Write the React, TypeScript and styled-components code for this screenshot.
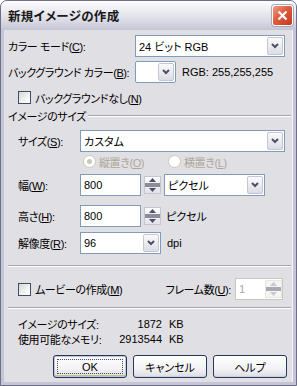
import React from 'react';
import styled, { createGlobalStyle } from 'styled-components';

const GlobalStyle = createGlobalStyle`
  html, body {
    margin: 0;
    padding: 0;
    background: #ffffff;
  }
  body {
    font-family: 'Liberation Sans', 'Noto Sans CJK JP', sans-serif;
    font-size: 11px;
    color: #000000;
    font-feature-settings: 'palt';
  }
`;

const Window = styled.div`
  width: 297px;
  height: 386px;
  box-sizing: border-box;
  border: 1px solid #6f6e89;
  border-radius: 7px 7px 0 0;
  background: #c6c5d7;
  display: flex;
  flex-direction: column;
  overflow: hidden;
`;

const TitleBar = styled.div`
  height: 29px;
  flex: none;
  display: flex;
  align-items: center;
  justify-content: space-between;
  padding: 0 3px 0 7px;
  background: linear-gradient(#fdfdfe 0%, #eeeef4 30%, #dadae4 70%, #c4c4d4 100%);
`;

const Title = styled.span`
  font-weight: bold;
  font-size: 12.5px;
  color: #1a1a1a;
  letter-spacing: 0.3px;
`;

const CloseButton = styled.div`
  width: 21px;
  height: 21px;
  box-sizing: border-box;
  border: 1px solid #ffffff;
  border-radius: 3px;
  background: linear-gradient(135deg, #f09b86 0%, #df5a3c 45%, #c4391d 100%);
  display: flex;
  align-items: center;
  justify-content: center;
  box-shadow: 0 0 0 1px #a8a8bc;
`;

const Frame = styled.div`
  flex: 1;
  padding: 0 3px 3px;
  display: flex;
`;

const Body = styled.div`
  flex: 1;
  background: #e0dfe3;
  padding: 5px 6px 0 4px;
  display: flex;
  flex-direction: column;
  box-shadow: inset -1px 0 0 #f4f4f7;
`;

const Row = styled.div<{ $mt?: number; $h?: number; $indent?: number }>`
  display: flex;
  align-items: center;
  height: ${(p) => p.$h ?? 22}px;
  margin-top: ${(p) => p.$mt ?? 0}px;
  padding-left: ${(p) => p.$indent ?? 0}px;
  flex: none;
`;

const Label = styled.span<{ $w?: number; $disabled?: boolean }>`
  width: ${(p) => (p.$w ? `${p.$w}px` : 'auto')};
  flex: none;
  white-space: nowrap;
  letter-spacing: -0.4px;
  color: ${(p) => (p.$disabled ? '#aca899' : '#000000')};
`;

const Field = styled.div<{ $w: number; $disabled?: boolean }>`
  width: ${(p) => p.$w}px;
  height: 22px;
  box-sizing: border-box;
  border: 1px solid ${(p) => (p.$disabled ? '#c9c7ba' : '#7f9db9')};
  background: #ffffff;
  display: flex;
  align-items: center;
  padding-left: 3px;
  flex: none;
  color: ${(p) => (p.$disabled ? '#aca899' : '#000000')};
`;

const FieldText = styled.span`
  flex: 1;
  white-space: nowrap;
`;

const ArrowButton = styled.div`
  width: 16px;
  height: 18px;
  box-sizing: border-box;
  margin-right: 1px;
  border: 1px solid #c5c5d4;
  border-radius: 2px;
  background: linear-gradient(#fbfbfc, #dcdce5);
  display: flex;
  align-items: center;
  justify-content: center;
  flex: none;
`;

const Spinner = styled.div<{ $disabled?: boolean; $ml?: number }>`
  width: 17px;
  height: 18px;
  margin-left: ${(p) => p.$ml ?? 3}px;
  box-sizing: border-box;
  border: 1px solid ${(p) => (p.$disabled ? '#e6e6ea' : '#c5c5d4')};
  background: ${(p) => (p.$disabled ? '#f4f4f2' : 'linear-gradient(#fbfbfc, #e2e2ea)')};
  display: flex;
  flex-direction: column;
  align-items: center;
  justify-content: space-between;
  padding: 1px 0;
  flex: none;
`;

const SpinBar = styled.div<{ $disabled?: boolean }>`
  width: 15px;
  height: 4px;
  background: ${(p) => (p.$disabled ? '#a9a9b3' : '#8c8c98')};
`;

const Swatch = styled.div`
  width: 41px;
  height: 22px;
  box-sizing: border-box;
  border: 1px solid #7f9db9;
  border-radius: 2px;
  background: #ffffff;
  display: flex;
  align-items: center;
  justify-content: flex-end;
  flex: none;
`;

const Box = styled.div`
  width: 13px;
  height: 13px;
  box-sizing: border-box;
  border: 1px solid #3c4e6c;
  background: linear-gradient(135deg, #d8d8d0 0%, #f4f4f0 60%, #ffffff 100%);
  margin-right: 4px;
  flex: none;
`;

const Radio = styled.div`
  width: 13px;
  height: 13px;
  box-sizing: border-box;
  border: 1px solid #cac8bb;
  border-radius: 50%;
  background: #ffffff;
  margin-right: 3px;
  display: flex;
  align-items: center;
  justify-content: center;
  flex: none;
`;

const RadioDot = styled.div`
  width: 5px;
  height: 5px;
  border-radius: 50%;
  background: #cac8bb;
`;

const GroupHeader = styled.div`
  display: flex;
  align-items: center;
  height: 16px;
  margin-top: 3px;
  margin-right: -4px;
  flex: none;
  gap: 2px;
`;

const Etched = styled.div<{ $mt?: number }>`
  flex: 1;
  height: 0;
  border-top: 1px solid #a7a6b0;
  border-bottom: 1px solid #ffffff;
  margin-top: ${(p) => p.$mt ?? 0}px;
`;

const Separator = styled(Etched)`
  flex: none;
  margin-right: -4px;
`;

const Value = styled.span<{ $w: number }>`
  width: ${(p) => p.$w}px;
  text-align: right;
  flex: none;
`;

const Unit = styled.span<{ $ml: number }>`
  margin-left: ${(p) => p.$ml}px;
  white-space: nowrap;
`;

const Spacer = styled.div`
  flex: 1;
`;

const ButtonBar = styled.div`
  display: flex;
  justify-content: flex-end;
  gap: 6px;
  margin-top: 9px;
  flex: none;
`;

const Button = styled.div<{ $default?: boolean }>`
  width: 74px;
  height: 23px;
  box-sizing: border-box;
  border: 1px solid #23385a;
  border-radius: 3px;
  background: linear-gradient(#ffffff 0%, #f3f3f6 60%, #dcdce4 100%);
  display: flex;
  align-items: center;
  justify-content: center;
  position: relative;
  box-shadow: ${(p) => (p.$default ? 'inset 0 0 0 1px #c4c3d8, inset 0 -1px 0 1px #b8c48a' : 'inset 0 -1px 0 #d0d0da')};
`;

const FocusRing = styled.div`
  position: absolute;
  inset: 3px;
  border: 1px dotted #4a4a4a;
`;

function Chevron() {
  return (
    <svg width="8" height="6" viewBox="0 0 8 6">
      <path d="M1 1 L4 4 L7 1" fill="none" stroke="#4d5068" strokeWidth="2" />
    </svg>
  );
}

function Arrow({ up, color }: { up?: boolean; color: string }) {
  return (
    <svg width="7" height="4" viewBox="0 0 7 4">
      <path d={up ? 'M0 4 L3.5 0 L7 4 Z' : 'M0 0 L3.5 4 L7 0 Z'} fill={color} />
    </svg>
  );
}

function SpinBox({ disabled, ml }: { disabled?: boolean; ml?: number }) {
  const c = disabled ? '#c9c9d0' : '#4d5068';
  return (
    <Spinner $disabled={disabled} $ml={ml}>
      <Arrow up color={c} />
      <SpinBar $disabled={disabled} />
      <Arrow color={c} />
    </Spinner>
  );
}

function Select({ w, text }: { w: number; text: string }) {
  return (
    <Field $w={w}>
      <FieldText>{text}</FieldText>
      <ArrowButton>
        <Chevron />
      </ArrowButton>
    </Field>
  );
}

export default function App() {
  return (
    <>
      <GlobalStyle />
      <Window>
        <TitleBar>
          <Title>新規イメージの作成</Title>
          <CloseButton>
            <svg width="11" height="11" viewBox="0 0 11 11">
              <path d="M1.5 1.5 L9.5 9.5 M9.5 1.5 L1.5 9.5" stroke="#ffffff" strokeWidth="2.2" />
            </svg>
          </CloseButton>
        </TitleBar>
        <Frame>
          <Body>
            <Row>
              <Label $w={127}>
                カラー モード(<u>C</u>):
              </Label>
              <Select w={150} text="24 ビット RGB" />
            </Row>
            <Row $mt={4}>
              <Label $w={127}>
                バックグラウンド カラー(<u>B</u>):
              </Label>
              <Swatch>
                <ArrowButton>
                  <Chevron />
                </ArrowButton>
              </Swatch>
              <Unit $ml={6}>RGB: 255,255,255</Unit>
            </Row>
            <Row $mt={7} $h={15} $indent={10}>
              <Box />
              <Label>
                バックグラウンドなし(<u>N</u>)
              </Label>
            </Row>
            <GroupHeader>
              <Label>イメージのサイズ</Label>
              <Etched />
            </GroupHeader>
            <Row $mt={6} $indent={10}>
              <Label $w={62}>
                サイズ(<u>S</u>):
              </Label>
              <Select w={205} text="カスタム" />
            </Row>
            <Row $mt={2} $h={15} $indent={75}>
              <Radio>
                <RadioDot />
              </Radio>
              <Label $w={69} $disabled>
                縦置き(<u>O</u>)
              </Label>
              <Radio />
              <Label $disabled>
                横置き(<u>L</u>)
              </Label>
            </Row>
            <Row $mt={5} $indent={10}>
              <Label $w={62}>
                幅(<u>W</u>):
              </Label>
              <Field $w={61}>
                <FieldText>800</FieldText>
              </Field>
              <SpinBox />
              <Unit $ml={3}>
                <Select w={101} text="ピクセル" />
              </Unit>
            </Row>
            <Row $mt={9} $indent={10}>
              <Label $w={62}>
                高さ(<u>H</u>):
              </Label>
              <Field $w={61}>
                <FieldText>800</FieldText>
              </Field>
              <SpinBox />
              <Unit $ml={5}>ピクセル</Unit>
            </Row>
            <Row $mt={5} $indent={10}>
              <Label $w={62}>
                解像度(<u>R</u>):
              </Label>
              <Select w={81} text="96" />
              <Unit $ml={6}>dpi</Unit>
            </Row>
            <Separator $mt={11} />
            <Row $mt={11} $indent={10}>
              <Box />
              <Label>
                ムービーの作成(<u>M</u>)
              </Label>
              <Spacer />
              <Label>
                フレーム数(<u>U</u>):
              </Label>
              <Unit $ml={4}>
                <Field $w={48} $disabled>
                  <FieldText>1</FieldText>
                  <SpinBox disabled ml={0} />
                </Field>
              </Unit>
              <Unit $ml={4} />
            </Row>
            <Separator $mt={7} />
            <Row $mt={7} $h={15} $indent={10}>
              <Label $w={85}>イメージのサイズ:</Label>
              <Value $w={59}>1872</Value>
              <Unit $ml={7}>KB</Unit>
            </Row>
            <Row $h={15} $indent={10}>
              <Label $w={85}>使用可能なメモリ:</Label>
              <Value $w={59}>2913544</Value>
              <Unit $ml={7}>KB</Unit>
            </Row>
            <ButtonBar>
              <Button $default>
                OK
                <FocusRing />
              </Button>
              <Button>キャンセル</Button>
              <Button>ヘルプ</Button>
            </ButtonBar>
          </Body>
        </Frame>
      </Window>
    </>
  );
}
